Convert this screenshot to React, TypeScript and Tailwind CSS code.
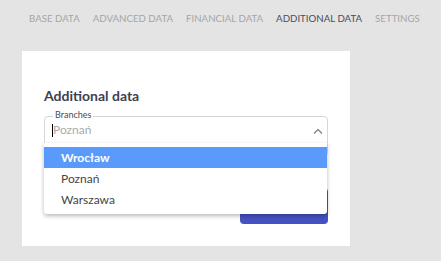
const TABS = ["BASE DATA", "ADVANCED DATA", "FINANCIAL DATA", "ADDITIONAL DATA", "SETTINGS"];
const ACTIVE = "ADDITIONAL DATA";
const BRANCHES = ["Wrocław", "Poznań", "Warszawa"];

export default function App() {
  return (
    <div className="w-[441px] h-[261px] overflow-hidden bg-[#e4e4e4] font-['Lato','Open_Sans',sans-serif]">
      {/* Tabs */}
      <div className="flex gap-[13px] pl-[29px] pt-[11px]">
        {TABS.map((t) => (
          <div
            key={t}
            className={`text-[9.7px] leading-[14px] ${
              t === ACTIVE ? "text-[#4a4c5a]" : "text-[#a6a6a6]"
            }`}
          >
            {t}
          </div>
        ))}
      </div>

      {/* Card */}
      <div className="ml-[22px] mt-[26px] w-[328px] h-[195px] bg-white px-[22px] pt-[35px] flex flex-col">
        <h2 className="text-[14px] leading-[20px] font-bold text-[#3d4150]">Additional data</h2>

        <div className="relative mt-[10px] h-[40px] border border-[#d6d6d6] rounded-[4px] pl-[8px] pt-[5px]">
          <span className="absolute -top-[7px] left-[8px] px-[2px] bg-white text-[9px] leading-none text-[#4d4d4d]">
            Branches
          </span>
          <span className="absolute left-[7px] top-[7px] w-px h-[13px] bg-black" />
          <div className="text-[12px] leading-[16px] text-[#aaaaaa]">Poznań</div>
          <svg
            className="absolute right-[4px] top-[11px]"
            width="10"
            height="6"
            viewBox="0 0 10 6"
            fill="none"
          >
            <polyline points="1,5.5 5,1.5 9,5.5" stroke="#7a7a8a" strokeWidth="1.2" />
          </svg>

          {/* Dropdown menu */}
          <div className="absolute -left-px top-[26px] w-[283px] bg-white py-[4px] rounded-b-[3px] shadow-[0_2px_4px_rgba(0,0,0,0.28)] z-10">
            {BRANCHES.map((b, i) => (
              <div
                key={b}
                className={`h-[21px] flex items-center pl-[17px] text-[12px] ${
                  i === 0 ? "bg-[#5a9afa] text-white font-bold" : "text-[#444444]"
                }`}
              >
                {b}
              </div>
            ))}
          </div>
        </div>

        <div className="flex justify-end mt-[32px]">
          <button className="w-[88px] h-[36px] rounded-[4px] bg-[#4652c2]" />
        </div>
      </div>
    </div>
  );
}
